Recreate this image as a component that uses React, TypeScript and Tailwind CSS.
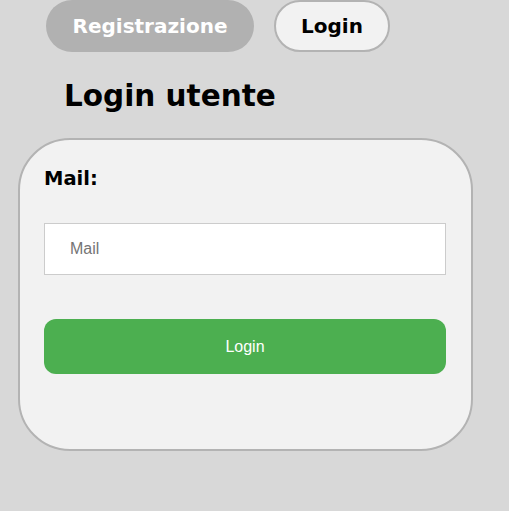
export default function App() {
  return (
    <div className="min-h-[511px] w-full bg-[#d8d8d8] font-['DejaVu_Sans',sans-serif]">
      {/* Tabs */}
      <div className="flex gap-5 pl-[46px]">
        <button className="h-[52px] w-[208px] rounded-full bg-[#b1b1b1] text-[20px] font-bold text-white">
          Registrazione
        </button>
        <button className="h-[52px] w-[116px] rounded-full border-2 border-[#b3b3b3] bg-[#f2f2f2] text-[20px] font-bold text-black">
          Login
        </button>
      </div>

      <h2 className="mt-[26px] pl-[64px] text-[29.5px] font-bold leading-[36px] text-black">Login utente</h2>

      {/* Card */}
      <div className="ml-[18px] mt-[24px] h-[313px] w-[455px] rounded-[52px] border-2 border-[#b3b3b3] bg-[#f2f2f2] px-[24px] pt-[26px]">
        <label className="block text-[19.5px] font-bold leading-[26px] text-black">Mail:</label>
        <input
          type="text"
          placeholder="Mail"
          className="mt-[31px] block h-[52px] w-[402px] border border-[#cccccc] bg-white px-[25px] font-['Liberation_Sans',sans-serif] text-[16px] placeholder:text-[#757575] outline-none"
        />
        <button className="mt-[44px] block h-[55px] w-[402px] rounded-[12px] bg-[#4caf50] font-['Liberation_Sans',sans-serif] text-[16px] text-white">
          Login
        </button>
      </div>
    </div>
  )
}
